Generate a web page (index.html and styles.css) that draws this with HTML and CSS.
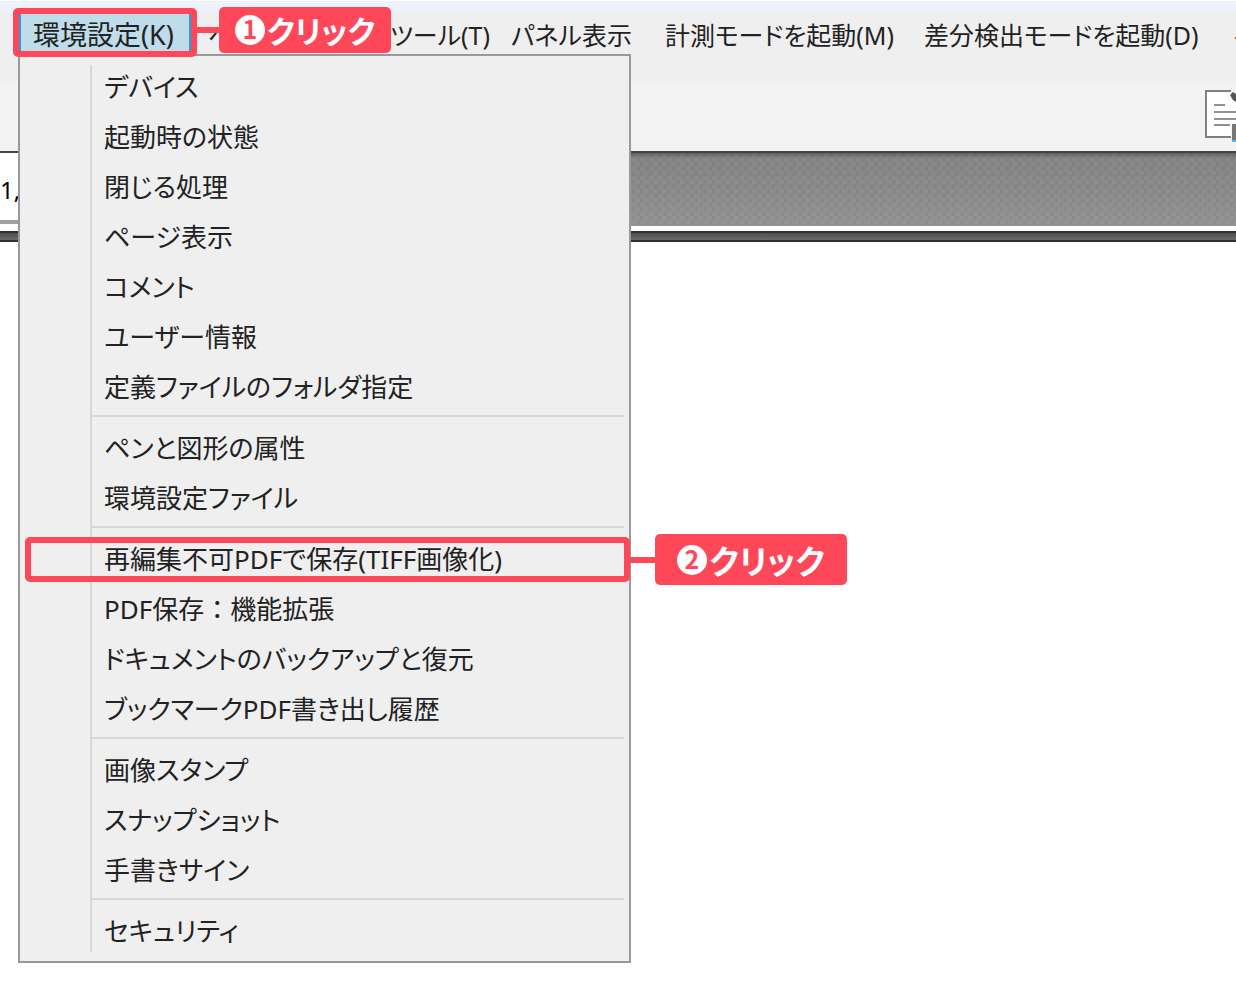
FILE: index.html
```
<!DOCTYPE html>
<html lang="ja">
<head>
    <meta charset="UTF-8">
    <meta name="viewport" content="width=device-width, initial-scale=1.0">
    <title>環境設定</title>
    <link rel="stylesheet" href="styles.css">
</head>
<body>

<div class="title-strip"></div>

<nav class="menubar">
    <div class="menu-root">
        <button class="menubar-item active" type="button">環境設定(K)</button>

        <div class="dropdown">
            <div class="menu-group">
                <button class="menu-item" type="button">デバイス</button>
                <button class="menu-item" type="button">起動時の状態</button>
                <button class="menu-item" type="button">閉じる処理</button>
                <button class="menu-item" type="button">ページ表示</button>
                <button class="menu-item" type="button">コメント</button>
                <button class="menu-item" type="button">ユーザー情報</button>
                <button class="menu-item" type="button">定義ファイルのフォルダ指定</button>
            </div>
            <div class="menu-group">
                <button class="menu-item" type="button">ペンと図形の属性</button>
                <button class="menu-item" type="button">環境設定ファイル</button>
            </div>
            <div class="menu-group">
                <div class="menu-row">
                    <button class="menu-item" type="button">再編集不可PDFで保存(TIFF画像化)</button>
                    <div class="frame frame-item"></div>
                    <div class="callout callout-item">
                        <svg class="callout-number" viewBox="0 0 30 30"><circle cx="15" cy="15" r="15"/><text x="15" y="24" text-anchor="middle">2</text></svg>
                        <span>クリック</span>
                    </div>
                </div>
                <button class="menu-item full-width" type="button">PDF保存：機能拡張</button>
                <button class="menu-item" type="button">ドキュメントのバックアップと復元</button>
                <button class="menu-item" type="button">ブックマークPDF書き出し履歴</button>
            </div>
            <div class="menu-group">
                <button class="menu-item" type="button">画像スタンプ</button>
                <button class="menu-item" type="button">スナップショット</button>
                <button class="menu-item" type="button">手書きサイン</button>
            </div>
            <div class="menu-group">
                <button class="menu-item" type="button">セキュリティ</button>
            </div>
        </div>

        <div class="frame frame-root"></div>
        <div class="callout callout-root">
            <svg class="callout-number" viewBox="0 0 30 30"><circle cx="15" cy="15" r="15"/><text x="15" y="24" text-anchor="middle">1</text></svg>
            <span>クリック</span>
        </div>
    </div>
    <button class="menubar-item" type="button">ペ</button>
    <button class="menubar-item" type="button">ツール(T)</button>
    <button class="menubar-item" type="button">パネル表示</button>
    <button class="menubar-item" type="button">計測モードを起動(M)</button>
    <button class="menubar-item" type="button">差分検出モードを起動(D)</button>
    <button class="menubar-item" type="button">ヘ</button>
</nav>

<div class="toolbar">
    <button class="tool" type="button" aria-label="文書">
        <svg width="32" height="54" viewBox="0 0 32 54">
            <path d="M27 1H2v46h25" fill="#fff" stroke="#808080" stroke-width="2"/>
            <path d="M27 10h5v26h-5z" fill="#fff"/>
            <path d="M10 15h11M10 22h22M10 29h22M10 35h16" stroke="#909090" stroke-width="2"/>
            <path d="M26 5l3-3 3 2v8l-3-2z" fill="#555"/>
            <path d="M28 34h4v16h-4z" fill="#777"/>
            <path d="M28 50h4v2h-4z" fill="#5fb0f5"/>
        </svg>
    </button>
</div>

<div class="ruler">
    <div class="page-box">1,</div>
    <div class="texture"></div>
</div>
<div class="divider"></div>

</body>
</html>
```
FILE: styles.css
```
* {
    box-sizing: border-box;
}
body {
    font-family: "Noto Sans", "Noto Sans CJK JP", sans-serif;
    font-size: 26px;
    font-feature-settings: "palt";
    color: #222;
    background-color: #fff;
    margin: 0;
    min-height: 100vh;
    overflow-x: hidden;
}
button {
    font: inherit;
    font-feature-settings: inherit;
    color: inherit;
    background: none;
    border: 0;
    padding: 0;
    white-space: nowrap;
    text-align: left;
}
.title-strip {
    height: 12px;
    background-color: #edf2fb;
    border-top: 1px solid #fff;
}

/* menu bar */
.menubar {
    display: grid;
    grid-template-columns: 172px 182px 121px 154px 259px 309px 1fr;
    height: 69px;
    padding-left: 19px;
    background-color: #efefef;
    font-size: 25px;
}
.menu-root {
    position: relative;
}
.menubar-item {
    min-width: 0;
    height: 46px;
    padding-left: 17px;
    line-height: 46px;
}
.menubar-item.active {
    width: 100%;
    height: 44px;
    padding-left: 12px;
    background-color: #bfdcea;
    border: 2px solid #26a0da;
    font-size: 27px;
    line-height: 42px;
}

/* drop-down menu */
.dropdown {
    position: absolute;
    z-index: 1;
    top: 42px;
    left: -1px;
    width: 613px;
    padding: 5px 0 6px;
    background-color: #efefef;
    border: 2px solid #999;
    font-size: 26px;
}
.dropdown::before {
    content: "";
    position: absolute;
    top: 9px;
    bottom: 9px;
    left: 70px;
    width: 2px;
    background-color: #d7d7d7;
}
.menu-group + .menu-group::before {
    content: "";
    display: block;
    height: 2px;
    margin: 4px 5px 5px 72px;
    background-color: #d7d7d7;
}
.menu-row {
    position: relative;
}
.menu-item {
    display: block;
    width: 100%;
    height: 50px;
    padding-left: 84px;
    line-height: 52px;
}
.menu-item.full-width {
    font-feature-settings: normal;
}

/* red guides */
.frame {
    position: absolute;
    z-index: 2;
    border: 6px solid #ff475a;
    border-radius: 5px;
    pointer-events: none;
}
.frame-root {
    top: -4px;
    left: -6px;
    right: -6px;
    height: 49px;
}
.frame-item {
    top: 4px;
    left: 5px;
    right: -1px;
    height: 45px;
}
.callout {
    position: absolute;
    z-index: 2;
    display: flex;
    align-items: center;
    justify-content: center;
    gap: 2px;
    border-radius: 5px;
    background-color: #ff475a;
    color: #fff;
    font-family: "Noto Sans CJK JP", sans-serif;
    font-weight: 700;
    font-size: 31px;
    line-height: 44px;
    white-space: nowrap;
}
.callout::before {
    content: "";
    position: absolute;
    right: 100%;
    width: 26px;
    height: 6px;
    background-color: #ff475a;
}
.callout-root {
    top: -5px;
    left: 200px;
    width: 172px;
    height: 46px;
}
.callout-item {
    top: 1px;
    left: 635px;
    width: 192px;
    height: 51px;
    font-size: 33px;
}
.callout-number {
    flex: none;
    width: 30px;
    height: 30px;
    fill: #fff;
}
.callout-number text {
    fill: #ff475a;
    font-size: 25px;
}

/* toolbar and ruler */
.toolbar {
    display: flex;
    justify-content: flex-end;
    align-items: flex-start;
    height: 70px;
    padding-top: 9px;
    background-color: #f3f3f3;
}
.tool svg {
    display: block;
}
.ruler {
    display: flex;
    height: 75px;
}
.page-box {
    width: 19px;
    height: 73px;
    overflow: hidden;
    border-top: 2px solid #444;
    border-bottom: 4px solid #a0a0a0;
    background-color: #fff;
    color: #000;
    font-size: 24px;
    line-height: 74px;
}
.texture {
    flex: 1;
    border-top: 2px solid #444;
    background:
        linear-gradient(rgba(60, 60, 60, 0.5), transparent 5px),
        repeating-conic-gradient(rgba(255, 255, 255, 0.06) 0 25%, transparent 0 50%) 0 0 / 9px 9px,
        linear-gradient(#808080, #8e8e8e);
}
.divider {
    height: 16px;
    border-top: 5px solid #fff;
    background: linear-gradient(#303030 2px, #505050 2px, #6a6a6a 9px, #303030 9px);
}
```
